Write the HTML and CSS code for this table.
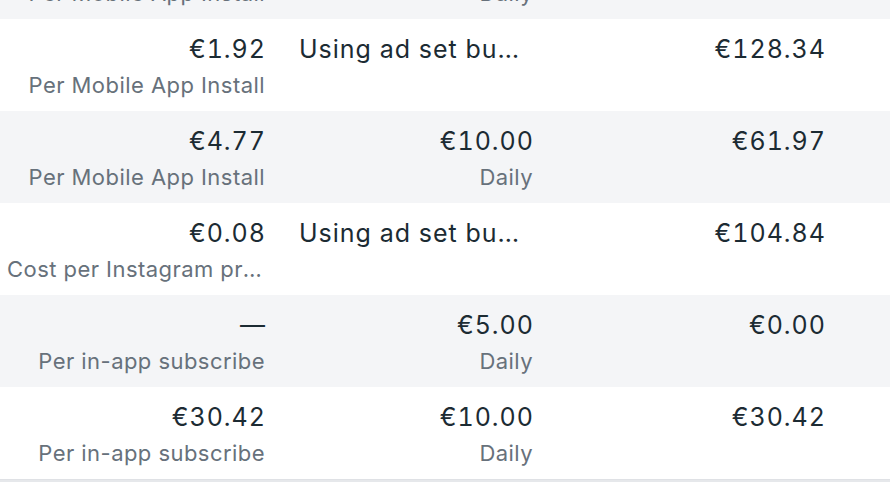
FILE: index.html
```html
<!DOCTYPE html>
<html lang="en">
<head>
<meta charset="utf-8">
<link rel="stylesheet" href="styles.css">
</head>
<body>
<div class="table">
  <div class="row alt">
    <div class="cell num"><div class="primary">€2.10</div><div class="secondary">Per Mobile App Install</div></div>
    <div class="cell num"><div class="primary">€10.00</div><div class="secondary">Daily</div></div>
    <div class="cell num"><div class="primary">€20.00</div></div>
    <div class="cell"></div>
  </div>
  <div class="row">
    <div class="cell num"><div class="primary">€1.92</div><div class="secondary">Per Mobile App Install</div></div>
    <div class="cell"><div class="primary">Using ad set budget</div></div>
    <div class="cell num"><div class="primary">€128.34</div></div>
    <div class="cell"></div>
  </div>
  <div class="row alt">
    <div class="cell num"><div class="primary">€4.77</div><div class="secondary">Per Mobile App Install</div></div>
    <div class="cell num"><div class="primary">€10.00</div><div class="secondary">Daily</div></div>
    <div class="cell num"><div class="primary">€61.97</div></div>
    <div class="cell"></div>
  </div>
  <div class="row">
    <div class="cell num"><div class="primary">€0.08</div><div class="secondary">Cost per Instagram profile visit</div></div>
    <div class="cell"><div class="primary">Using ad set budget</div></div>
    <div class="cell num"><div class="primary">€104.84</div></div>
    <div class="cell"></div>
  </div>
  <div class="row alt">
    <div class="cell num"><div class="primary">—</div><div class="secondary">Per in-app subscribe</div></div>
    <div class="cell num"><div class="primary">€5.00</div><div class="secondary">Daily</div></div>
    <div class="cell num"><div class="primary">€0.00</div></div>
    <div class="cell"></div>
  </div>
  <div class="row last">
    <div class="cell num"><div class="primary">€30.42</div><div class="secondary">Per in-app subscribe</div></div>
    <div class="cell num"><div class="primary">€10.00</div><div class="secondary">Daily</div></div>
    <div class="cell num"><div class="primary">€30.42</div></div>
    <div class="cell"></div>
  </div>
</div>
</body>
</html>
```
FILE: styles.css
```css
html, body {
  margin: 0;
  padding: 0;
  background: #e6e8eb;
  overflow: hidden;
}
body {
  font-family: Inter, "Noto Sans", sans-serif;
  width: 890px;
  height: 482px;
}
.table {
  margin-top: -73px;
  background: #ffffff;
}
.row {
  display: grid;
  grid-template-columns: 281px 268px 292px 1fr;
  height: 92px;
  box-sizing: border-box;
  background: #ffffff;
}
.row.alt {
  background: #f4f5f7;
}
.row.last {
  border-bottom: 1px solid #dfe1e5;
  height: 93px;
}
.cell {
  padding: 14px 16px 0 18px;
  min-width: 0;
}
.row .cell:first-child {
  padding-left: 7px;
}
.num {
  text-align: right;
}
.primary {
  font-size: 25px;
  line-height: 32px;
  letter-spacing: 1px;
  font-variant-numeric: tabular-nums;
  color: #1c2b33;
  white-space: nowrap;
  overflow: hidden;
  text-overflow: ellipsis;
}
.num .primary {
  margin-right: -1px;
}
.secondary {
  margin-top: 6px;
  font-size: 22px;
  line-height: 28px;
  letter-spacing: 0.45px;
  color: #67717b;
  white-space: nowrap;
  overflow: hidden;
  text-overflow: ellipsis;
}
```
